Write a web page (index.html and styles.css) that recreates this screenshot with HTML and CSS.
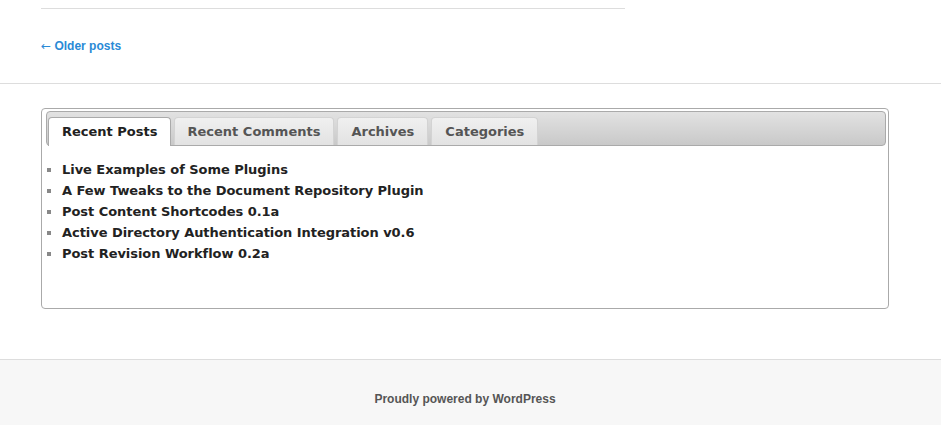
FILE: index.html
```html
<!DOCTYPE html>
<html>
<head>
<meta charset="utf-8">
<link rel="stylesheet" href="styles.css">
</head>
<body>
<div class="main">
  <div class="content">
    <hr class="post-sep">
    <nav class="nav-below"><a href="#"><span class="arrow">&larr;</span> Older posts</a></nav>
  </div>
</div>
<div class="sidebar">
  <div class="tabs">
    <ul class="tab-nav">
      <li class="tab active">Recent Posts</li>
      <li class="tab">Recent Comments</li>
      <li class="tab">Archives</li>
      <li class="tab">Categories</li>
    </ul>
    <ul class="posts">
      <li>Live Examples of Some Plugins</li>
      <li>A Few Tweaks to the Document Repository Plugin</li>
      <li>Post Content Shortcodes 0.1a</li>
      <li>Active Directory Authentication Integration v0.6</li>
      <li>Post Revision Workflow 0.2a</li>
    </ul>
  </div>
</div>
<footer class="footer">Proudly powered by WordPress</footer>
</body>
</html>
```
FILE: styles.css
```css
html, body { margin: 0; padding: 0; background: #fff; }
body { font-family: "Liberation Sans", Arial, sans-serif; }
.main { border-bottom: 1px solid #ddd; padding: 8px 0 0 41px; height: 75px; }
.content { width: 584px; }
.post-sep { margin: 0; border: 0; border-top: 1px solid #ddd; height: 0; }
.nav-below { margin-top: 30px; font-size: 12px; font-weight: bold; line-height: 15px; }
.nav-below a { color: #2a8ad6; text-decoration: none; }
.arrow { font-family: "DejaVu Sans", sans-serif; font-weight: normal; font-size: 12px; }
.sidebar { padding: 24px 52px 0 41px; height: 251px; border-bottom: 1px solid #ddd; }
.tabs { border: 1px solid #aaa; border-radius: 4px; height: 197px; padding: 2px 2px 0 4px; }
.tab-nav { list-style: none; margin: 0; padding: 5px 0 0 1px; height: 28px; display: flex; gap: 3px;
  border: 1px solid #aaa; border-radius: 4px; background: linear-gradient(#e2e2e2, #c9c9c9); }
.tab { font-family: "DejaVu Sans", Verdana, sans-serif; font-weight: bold; font-size: 13px; color: #555;
  border: 1px solid #d3d3d3; border-bottom: 0; border-radius: 4px 4px 0 0; background: linear-gradient(#f0f0f0, #e2e2e2);
  padding: 0 13px; line-height: 28px; height: 28px; box-sizing: border-box; margin-bottom: -1px; }
.tab.active { background: #fff; color: #212121; border-color: #aaa; height: 29px; padding: 0 12px 0 13px; }
.posts { list-style: none; margin: 0; padding: 13px 0 0 0; }
.posts li { font-family: "DejaVu Sans", Verdana, sans-serif; font-weight: bold; font-size: 13px; color: #222;
  line-height: 21px; padding-left: 16px; position: relative; letter-spacing: -0.05px; }
.posts li::before { content: ""; position: absolute; left: 1px; top: 9px; width: 4px; height: 4px; background: #888; }
.footer { background: #f7f7f7; text-align: center; color: #555; font-size: 12px; font-weight: bold; padding: 32px 11px 0 0; height: 65px; }
```
